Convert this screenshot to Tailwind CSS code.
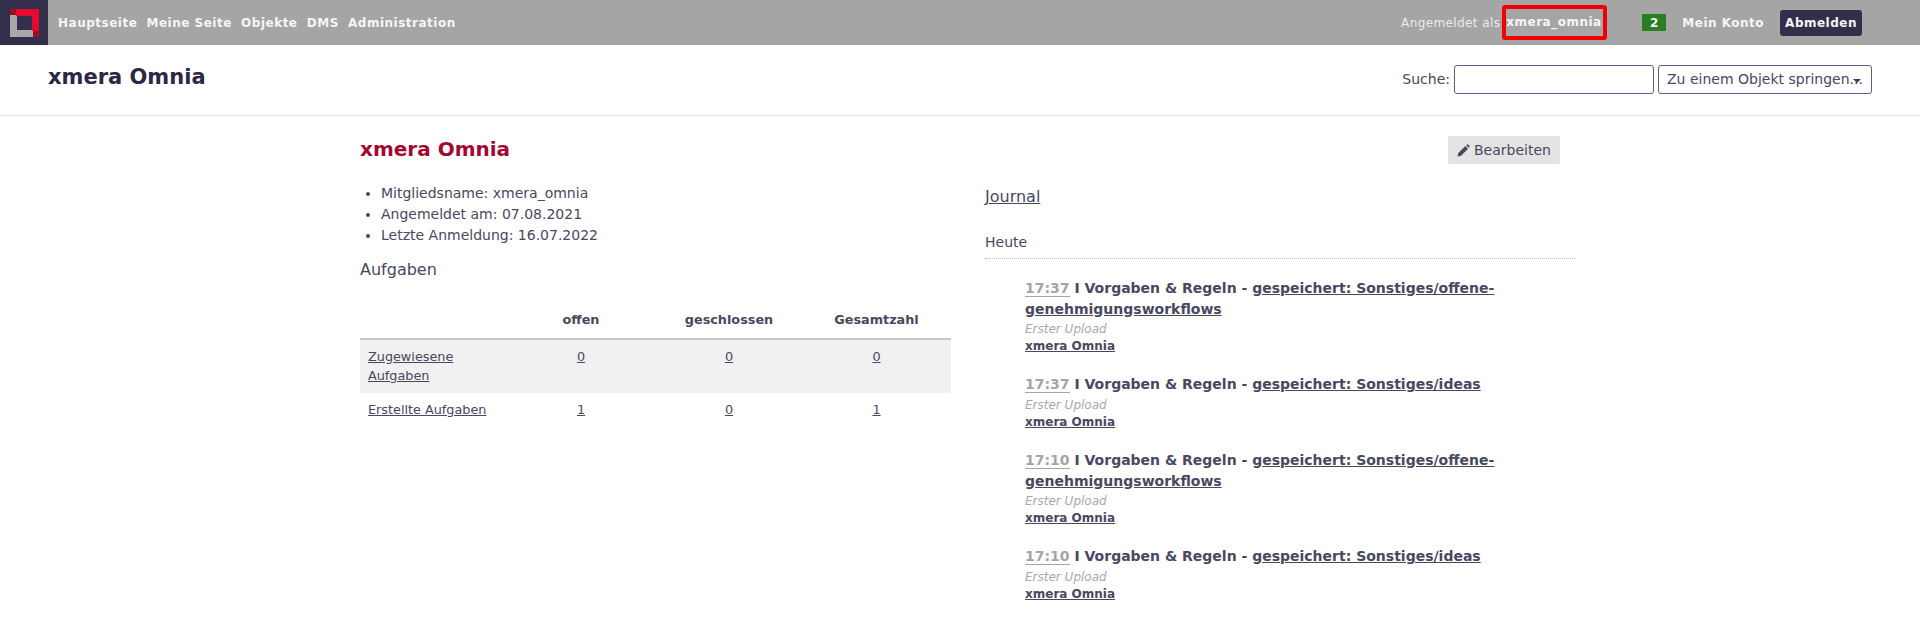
<!DOCTYPE html>
<html lang="de">
<head>
    <meta charset="UTF-8">
    <title>xmera Omnia</title>
    <script src="https://cdn.jsdelivr.net/npm/@tailwindcss/browser@4"></script>
</head>
<body class="font-['DejaVu_Sans',sans-serif] bg-white text-[#484860] text-[14px] h-[624px] overflow-hidden">
    <!-- top menu -->
    <div class="flex items-center h-[45px] bg-[#a5a5a5] text-[#f5f5f5] text-[12px] font-bold tracking-[0.5px]">
        <div class="flex items-center justify-center w-[48px] h-[45px] bg-[#332f4a]">
            <svg width="29" height="28" viewBox="0 0 29 28">
                <path d="M0 6h7v22H0zM0 21h23v7H0z" fill="#a9a9a9"/>
                <path d="M6 0h23v7H6zM22 0h7v22h-7z" fill="#e40b2e"/>
                <rect width="6" height="6" fill="#9c0f22"/>
                <rect x="23" y="22" width="6" height="6" fill="#9c0f22"/>
            </svg>
        </div>
        <nav class="flex gap-[9.25px] ml-[10px]">
            <a>Hauptseite</a>
            <a>Meine Seite</a>
            <a>Objekte</a>
            <a>DMS</a>
            <a>Administration</a>
        </nav>
        <div class="flex items-center ml-auto mr-[58px]">
            <span class="font-normal text-[#ececec] tracking-[0.4px]">Angemeldet als</span>
            <span class="ml-[2px] -mt-[1px] flex items-center h-[35px] w-[105px] border-[4px] border-[#f00000] rounded-[3px]">xmera_omnia</span>
            <span class="ml-[35px] flex items-center justify-center w-[24px] h-[17px] bg-[#2a7d23] rounded-[1px]">2</span>
            <a class="ml-[16px]">Mein Konto</a>
            <a class="ml-[16px] flex items-center h-[26px] px-[5px] bg-[#332f4a] rounded-[3px]">Abmelden</a>
        </div>
    </div>

    <!-- header -->
    <header class="flex items-center h-[71px] pb-[5px] border-b border-[#e4e4e4] pl-[48px] pr-[48px]">
        <h1 class="text-[21px] font-bold text-[#2a2845]">xmera Omnia</h1>
        <div class="flex items-center ml-auto gap-[4px] mt-[4px]">
            <label>Suche:</label>
            <input type="text" class="w-[200px] h-[29px] bg-white border border-[#625c8c] rounded-[3px]">
            <div class="relative w-[214px] h-[29px] border border-[#625c8c] rounded-[3px] flex items-center pl-[8px] overflow-hidden whitespace-nowrap">
                Zu einem Objekt springen...
                <span class="absolute right-[10px] top-[13px] w-0 h-0 border-x-[4px] border-x-transparent border-t-[4px] border-t-[#3e3e54]"></span>
            </div>
        </div>
    </header>

    <!-- content -->
    <main class="relative flex pl-[360px] pt-[19px]">
        <section class="w-[591px]">
            <h2 class="text-[20px] leading-[24px] font-bold text-[#a5082f] mt-[2px]">xmera Omnia</h2>
            <ul class="mt-[22px] list-disc pl-[21px] leading-[21px]">
                <li>Mitgliedsname: xmera_omnia</li>
                <li>Angemeldet am: 07.08.2021</li>
                <li>Letzte Anmeldung: 16.07.2022</li>
            </ul>
            <h3 class="mt-[14px] text-[16px] leading-[20px]">Aufgaben</h3>
            <table class="mt-[21px] w-full table-fixed text-[12.8px]">
                <thead>
                    <tr class="h-[38px] border-b-2 border-[#c8c8c8]">
                        <th class="w-[147px]"></th>
                        <th class="font-bold">offen</th>
                        <th class="font-bold">geschlossen</th>
                        <th class="font-bold pr-[1px]">Gesamtzahl</th>
                    </tr>
                </thead>
                <tbody class="text-center underline">
                    <tr class="bg-[#f1f1f1] align-top">
                        <td class="text-left pl-[8px] pt-[7px] pb-[8px] leading-[19px]">Zugewiesene<br>Aufgaben</td>
                        <td class="pt-[7px] leading-[19px]">0</td>
                        <td class="pt-[7px] leading-[19px]">0</td>
                        <td class="pt-[7px] pr-[1px] leading-[19px]">0</td>
                    </tr>
                    <tr>
                        <td class="text-left pl-[8px] py-[7px] leading-[19.5px]">Erstellte Aufgaben</td>
                        <td class="leading-[19.5px]">1</td>
                        <td class="leading-[19.5px]">0</td>
                        <td class="pr-[1px] leading-[19.5px]">1</td>
                    </tr>
                </tbody>
            </table>
        </section>

        <section class="ml-[34px] w-[590px]">
            <h3 class="mt-[52px] text-[16px] leading-[20px] underline">Journal</h3>
            <h4 class="mt-[26px] pb-[6px] leading-[19px] border-b border-dotted border-[#b4b4b4]">Heute</h4>

            <div class="pl-[40px]">
                <div class="mt-[18.5px]">
                    <div class="text-[14px] leading-[21px] font-bold"><span class="text-[#a5a5a5] border-b border-[#a5a5a5]">17:37</span> I Vorgaben &amp; Regeln - <a class="underline">gespeichert: Sonstiges/offene-<br>genehmigungsworkflows</a></div>
                    <div class="mt-[1.5px] text-[12px] leading-[17px] italic text-[#a9a9a9]">Erster Upload</div>
                    <a class="block text-[12px] leading-[17px] font-bold underline">xmera Omnia</a>
                </div>
                <div class="mt-[19px]">
                    <div class="text-[14px] leading-[21px] font-bold"><span class="text-[#a5a5a5] border-b border-[#a5a5a5]">17:37</span> I Vorgaben &amp; Regeln - <a class="underline">gespeichert: Sonstiges/ideas</a></div>
                    <div class="mt-[1.5px] text-[12px] leading-[17px] italic text-[#a9a9a9]">Erster Upload</div>
                    <a class="block text-[12px] leading-[17px] font-bold underline">xmera Omnia</a>
                </div>
                <div class="mt-[19px]">
                    <div class="text-[14px] leading-[21px] font-bold"><span class="text-[#a5a5a5] border-b border-[#a5a5a5]">17:10</span> I Vorgaben &amp; Regeln - <a class="underline">gespeichert: Sonstiges/offene-<br>genehmigungsworkflows</a></div>
                    <div class="mt-[1.5px] text-[12px] leading-[17px] italic text-[#a9a9a9]">Erster Upload</div>
                    <a class="block text-[12px] leading-[17px] font-bold underline">xmera Omnia</a>
                </div>
                <div class="mt-[19px]">
                    <div class="text-[14px] leading-[21px] font-bold"><span class="text-[#a5a5a5] border-b border-[#a5a5a5]">17:10</span> I Vorgaben &amp; Regeln - <a class="underline">gespeichert: Sonstiges/ideas</a></div>
                    <div class="mt-[1.5px] text-[12px] leading-[17px] italic text-[#a9a9a9]">Erster Upload</div>
                    <a class="block text-[12px] leading-[17px] font-bold underline">xmera Omnia</a>
                </div>
            </div>
        </section>

        <a class="absolute left-[1448px] top-[20px] flex items-center gap-[4px] h-[28px] px-[9px] bg-[#e4e4e4] rounded-[2px]">
            <svg width="13" height="13" viewBox="0 0 13 13" fill="#484860"><path d="M0.5 12.5l0.8-3.6 7-7 2.8 2.8-7 7zM9.2 1.1l0.9-0.7q0.5-0.3 1 0l1.4 1.4q0.4 0.5 0 1l-0.8 0.9z"/></svg>
            Bearbeiten
        </a>
    </main>
</body>
</html>
